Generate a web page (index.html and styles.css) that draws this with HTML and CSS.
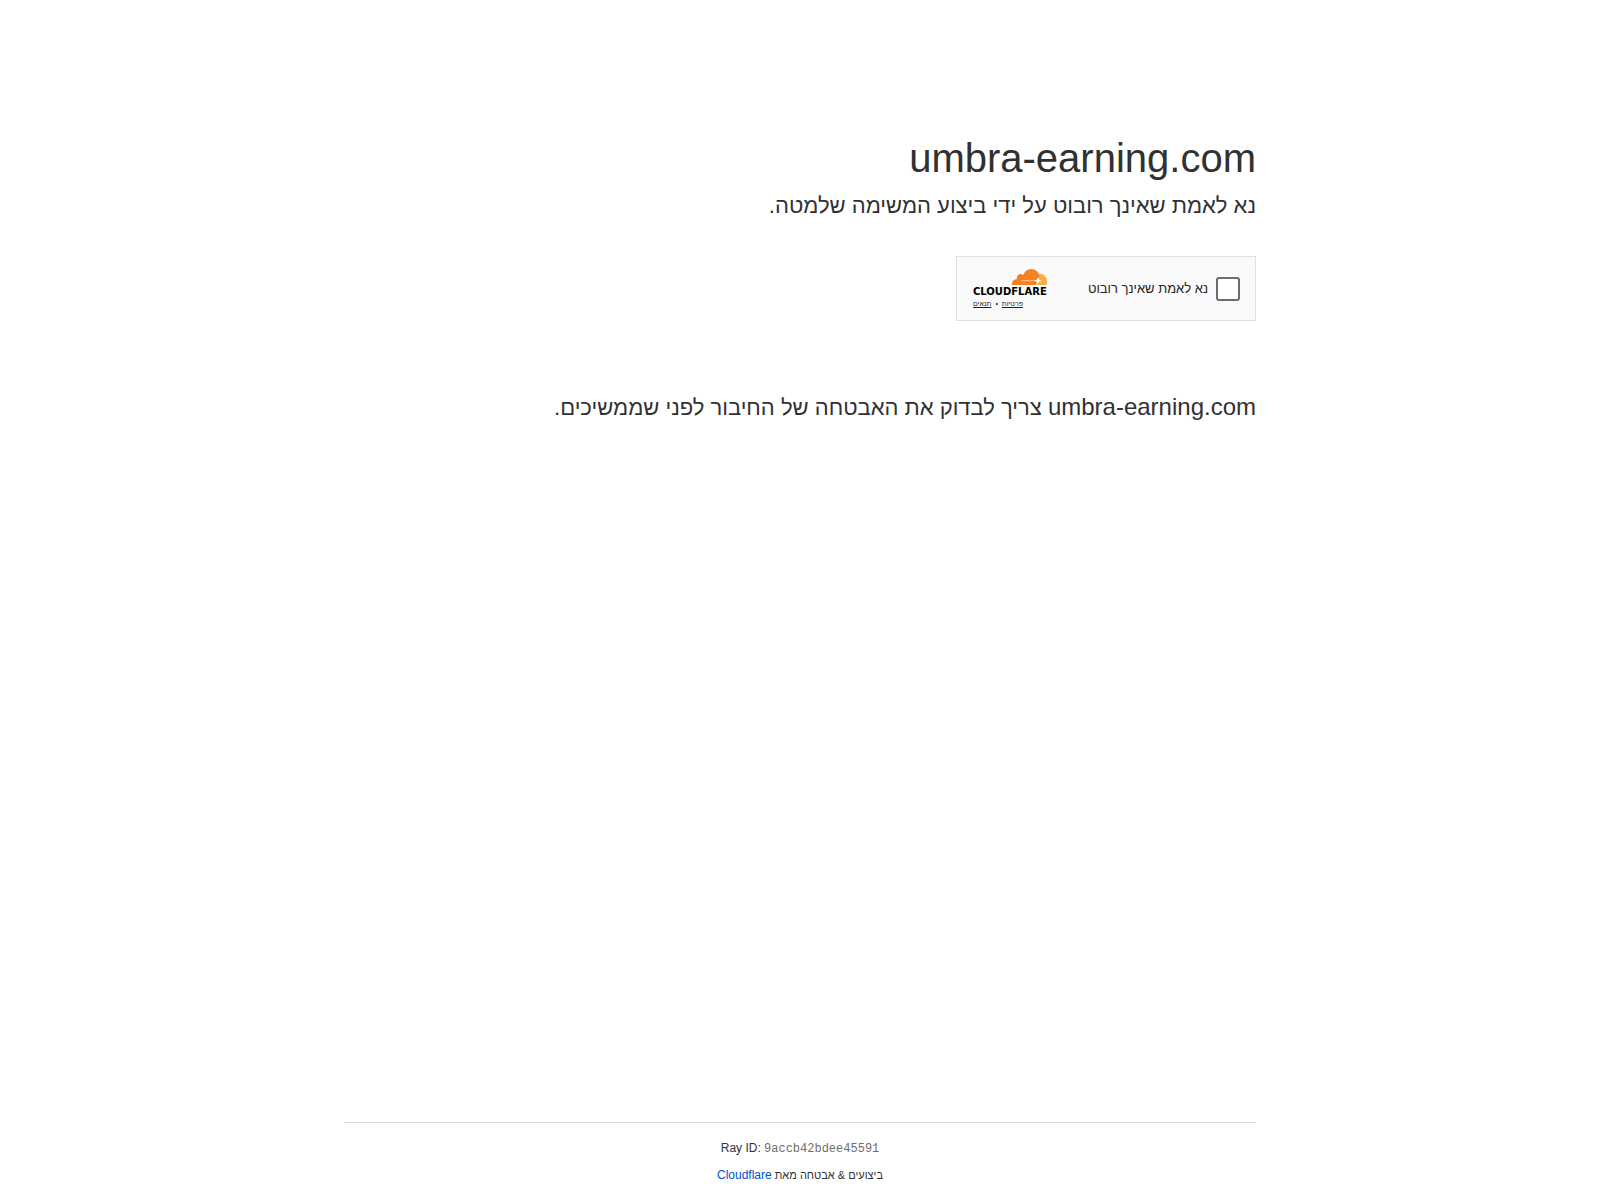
FILE: index.html
```html
<!DOCTYPE html>
<html lang="he" dir="rtl">
	<head>
		<meta charset="utf-8" />
		<meta name="viewport" content="width=device-width, initial-scale=1">
		<title>umbra-earning.com</title>
		<link rel="stylesheet" href="styles.css">
	</head>
	<body>
		<main class="main-content">
			<h1>umbra-earning.com</h1>
			<h2>נא לאמת שאינך רובוט על ידי ביצוע המשימה שלמטה.</h2>
			<div class="widget">
				<label class="cb-label">
					<input type="checkbox" class="cb">
					<span>נא לאמת שאינך רובוט</span>
				</label>
				<div class="branding">
					<div class="logo">
						<svg class="cloud" viewBox="0 0 35 16" aria-hidden="true">
							<path fill="#fbad41" d="M27.600 4.700C31.800 4.700 35 8 35 12.100C35 13.400 34.800 14.600 34.500 16H24L25 12Z"/>
							<path fill="#f6821f" d="M0 16C-.4 12.300 1.600 10.100 4.800 9.900C4.200 6.500 7.900 3.700 11.200 5.900C12.800 2.200 15.500 0 19.100 0C23.600 0 27 3.100 27.500 7.300L24.900 14L24.400 16Z"/>
							<path fill="#fff" opacity=".6" d="M9 11.300H24V12.200H9Z"/>
							<path fill="#fff" d="M22.600 11.600L25 10.600L26.200 8L27.200 10.700L29.800 12L26.800 13L25 16H24.200L25 13.100Z"/>
						</svg>
						<span class="wordmark">CLOUDFLARE</span>
					</div>
					<div class="terms">
						<a href="#">פרטיות</a>
						<span class="dot">•</span>
						<a href="#">תנאים</a>
					</div>
				</div>
			</div>
			<p class="core-msg"><span class="host">umbra-earning.com</span> צריך לבדוק את האבטחה של החיבור לפני שממשיכים.</p>
		</main>
		<footer class="footer">
			<div class="footer-inner">
				<div class="ray-id" dir="ltr">Ray ID: <code>9accb42bdee45591</code></div>
				<div class="credit">ביצועים &amp; אבטחה מאת <a href="#">Cloudflare</a></div>
			</div>
		</footer>
	</body>
</html>
```
FILE: styles.css
```css
* {
	box-sizing: border-box;
	margin: 0;
	padding: 0;
}

body {
	display: flex;
	flex-direction: column;
	min-height: 100vh;
	background-color: #fff;
	color: #313131;
	font-family: "Liberation Sans", Arial, sans-serif;
}

.main-content {
	flex: 1;
	width: 100%;
	max-width: 960px;
	margin: 128px auto 0;
	padding: 0 24px;
}

h1 {
	font-size: 40px;
	font-weight: 500;
	line-height: 60px;
}

h2,
.core-msg {
	font-size: 22px;
	font-weight: 400;
	line-height: 36px;
}

.host {
	font-size: 24px;
}

.widget {
	display: flex;
	align-items: center;
	justify-content: space-between;
	width: 300px;
	max-width: 100%;
	height: 65px;
	margin: 32px 0 68px;
	padding: 0 15px 0 16px;
	border: 1px solid #e0e0e0;
	background-color: #fafafa;
	color: #232323;
}

.cb-label {
	display: flex;
	align-items: center;
	gap: 8px;
	font-size: 13px;
	cursor: pointer;
}

.cb {
	appearance: none;
	width: 24px;
	height: 24px;
	border: 2px solid #6d6d6d;
	border-radius: 3px;
	background-color: #fff;
}

.cb:checked {
	background-color: #c44d0e;
}

.branding {
	display: flex;
	flex-direction: column;
	align-items: flex-end;
}

.logo {
	display: flex;
	flex-direction: column;
	align-items: flex-start;
}

.cloud {
	display: block;
	width: 35px;
	height: 16px;
}

.wordmark {
	color: #000;
	font: 700 10px/14px "DejaVu Sans", sans-serif;
}

.terms {
	display: flex;
	gap: 4px;
	font-size: 7px;
	line-height: 9px;
}

.terms a {
	color: #232323;
}

.footer {
	width: 100%;
	max-width: 960px;
	margin: 0 auto;
	padding: 0 24px;
	font-size: 12px;
	line-height: 18px;
}

.footer-inner {
	padding: 16px 0;
	border-top: 1px solid #d9d9d9;
	text-align: center;
}

.ray-id {
	margin-bottom: 8px;
}

.ray-id code {
	color: #6d6d6d;
	font-family: "Liberation Mono", monospace;
}

.credit {
	font-size: 11px;
}

.footer a {
	color: #0051c3;
	font-size: 12px;
	text-decoration: none;
}
```
